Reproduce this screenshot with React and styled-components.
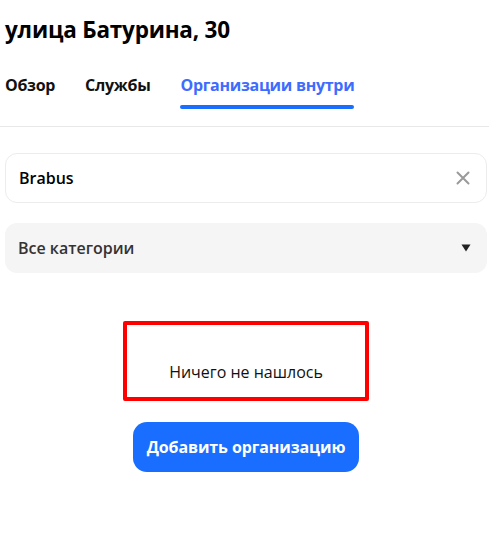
import React from "react";
import styled, { createGlobalStyle } from "styled-components";

const Global = createGlobalStyle`
  html, body { margin: 0; padding: 0; background: #fff; }
  body { font-family: "Open Sans", "Noto Sans", sans-serif; color: #000; }
  * { box-sizing: border-box; }
`;

const Page = styled.div`
  width: 489px;
  display: flex;
  flex-direction: column;
`;

const Header = styled.div`
  padding: 0 5px 17px 5px;
  border-bottom: 1px solid #e8e8e8;
`;

const Title = styled.h1`
  margin: 0;
  padding-top: 16px;
  font-size: 22.5px;
  line-height: 28px;
  font-weight: 700;
  letter-spacing: -0.2px;
`;

const Tabs = styled.div`
  display: flex;
  gap: 30px;
  margin-top: 31px;
`;

const Tab = styled.div`
  font-size: 16px;
  font-weight: 700;
  line-height: 20px;
  letter-spacing: -0.3px;
  color: ${(p) => (p.$active ? "#3d6cff" : "#111")};
  &::after {
    content: "";
    display: block;
    margin-top: 10px;
    height: 4px;
    border-radius: 2px;
    background: ${(p) => (p.$active ? "#196dff" : "transparent")};
  }
`;

const Body = styled.div`
  padding: 26px 2px 0 5px;
  display: flex;
  flex-direction: column;
  gap: 20px;
`;

const Field = styled.div`
  height: 50px;
  border-radius: 12px;
  display: flex;
  align-items: center;
  justify-content: space-between;
  padding: 0 16px 0 13px;
  background: ${(p) => (p.$filled ? "#f5f5f5" : "#fff")};
  border: ${(p) => (p.$filled ? "none" : "1px solid #ececec")};
  font-size: 16px;
  font-weight: 600;
  color: ${(p) => (p.$filled ? "#333" : "#000")};
`;

const Empty = styled.div`
  display: flex;
  flex-direction: column;
  align-items: center;
  margin-top: 28px;
`;

const Notice = styled.div`
  width: 246px;
  height: 80px;
  border: 4px solid #ff0000;
  border-radius: 2px;
  display: flex;
  align-items: flex-end;
  justify-content: center;
  padding-bottom: 14px;
  font-size: 16px;
  color: #111;
`;

const AddButton = styled.button`
  margin-top: 21px;
  height: 50px;
  padding: 0 14px;
  border: none;
  border-radius: 14px;
  background: #196dff;
  color: #fff;
  font-family: inherit;
  font-size: 16px;
  font-weight: 700;
  letter-spacing: -0.1px;
`;

const Clear = () => (
  <svg width="14" height="14" viewBox="0 0 14 14">
    <path d="M1.5 1.5 L12.5 12.5 M12.5 1.5 L1.5 12.5" stroke="#9a9a9a" strokeWidth="2" strokeLinecap="round" />
  </svg>
);

const Caret = () => (
  <svg width="10" height="8" viewBox="0 0 10 8">
    <path d="M0.5 0.5 H9.5 L5 7.5 Z" fill="#222" />
  </svg>
);

export default function App() {
  return (
    <Page>
      <Global />
      <Header>
        <Title>улица Батурина, 30</Title>
        <Tabs>
          <Tab>Обзор</Tab>
          <Tab>Службы</Tab>
          <Tab $active>Организации внутри</Tab>
        </Tabs>
      </Header>
      <Body>
        <Field>
          <span>Brabus</span>
          <Clear />
        </Field>
        <Field $filled>
          <span>Все категории</span>
          <Caret />
        </Field>
        <Empty>
          <Notice>Ничего не нашлось</Notice>
          <AddButton>Добавить организацию</AddButton>
        </Empty>
      </Body>
    </Page>
  );
}
